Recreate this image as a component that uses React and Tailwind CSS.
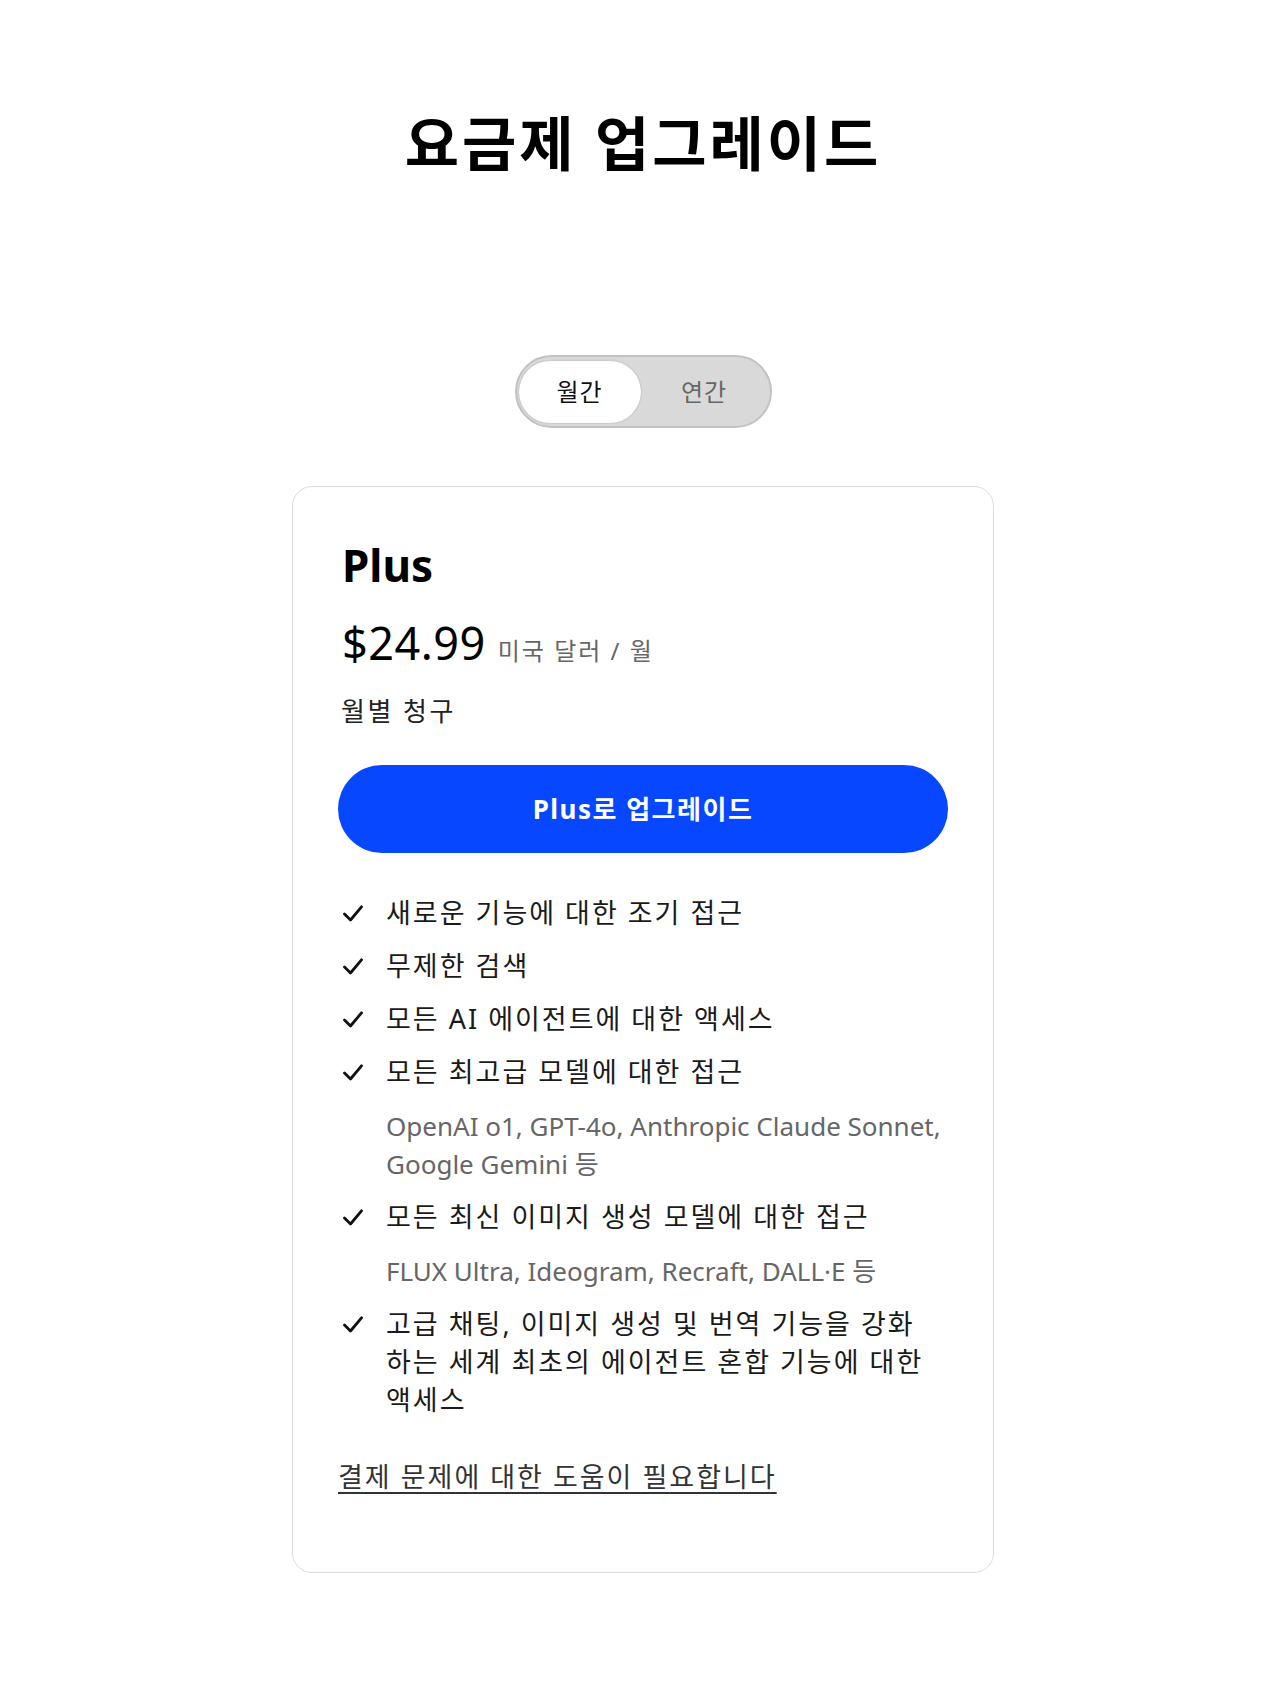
import React from 'react'

const FONT = { fontFamily: '"Noto Sans", "Noto Sans CJK KR", sans-serif' }

const features = [
  { text: '새로운 기능에 대한 조기 접근' },
  { text: '무제한 검색' },
  { text: '모든 AI 에이전트에 대한 액세스' },
  { text: '모든 최고급 모델에 대한 접근', sub: 'OpenAI o1, GPT-4o, Anthropic Claude Sonnet, Google Gemini 등' },
  { text: '모든 최신 이미지 생성 모델에 대한 접근', sub: 'FLUX Ultra, Ideogram, Recraft, DALL·E 등' },
  { text: '고급 채팅, 이미지 생성 및 번역 기능을 강화하는 세계 최초의 에이전트 혼합 기능에 대한 액세스' },
]

function Check() {
  return (
    <svg width="20" height="17" viewBox="0 0 20 17" className="shrink-0">
      <polyline points="1.5,9 7.5,15 18.5,1.8" fill="none" stroke="#111" strokeWidth="2.8" strokeLinecap="round" strokeLinejoin="round" />
    </svg>
  )
}

export default function App() {
  return (
    <div className="min-h-screen bg-white text-black pl-[6px] pt-[108px] pb-[126px]" style={FONT}>
      <div className="flex flex-col items-center">
        <h1 className="text-[59px] leading-[70px] font-bold tracking-[3px]">요금제 업그레이드</h1>

        <div className="mt-[177px] w-[257px] h-[73px] rounded-full border-2 border-[#c2c2c2] bg-[#d9d9d9] flex items-center pl-[2px] pr-[2px]">
          <button className="w-[122px] h-[62px] rounded-full bg-white shadow-[0_0_2px_rgba(0,0,0,0.25)] text-[24px] tracking-[1px] text-[#111] flex items-center justify-center">
            월간
          </button>
          <button className="flex-1 h-[62px] text-[24px] tracking-[1px] text-[#666] flex items-center justify-center">
            연간
          </button>
        </div>

        <div className="mt-[58px] w-[702px] rounded-[20px] border border-[#dcdcdc] px-[45px] pt-[52px] pb-[76px]">
          <div className="pl-[4px] text-[44px] leading-[53px] font-bold">Plus</div>

          <div className="mt-[26px] pl-[4px] flex items-baseline h-[50px]">
            <span className="text-[45px] leading-[50px] tracking-[0.5px]">$24.99</span>
            <span className="ml-[12px] text-[24px] tracking-[2px] text-[#666]">미국 달러 / 월</span>
          </div>

          <div className="mt-[26px] pl-[3px] text-[26px] leading-[34px] tracking-[2.5px] text-[#222]">월별 청구</div>

          <button className="mt-[37px] w-full h-[88px] rounded-full bg-[#0747ff] text-white text-[26px] font-bold tracking-[1.5px] flex items-center justify-center">
            Plus로 업그레이드
          </button>

          <ul className="mt-[41px] flex flex-col gap-[15px]">
            {features.map((f) => (
              <li key={f.text} className="flex">
                <div className="w-[48px] h-[38px] flex items-center pl-[5px]">
                  <Check />
                </div>
                <div className="flex-1">
                  <div className="pr-[14px] text-[27px] leading-[38px] tracking-[2px] text-[#1a1a1a]">{f.text}</div>
                  {f.sub && (
                    <div className="mt-[16px] text-[26px] leading-[38px] text-[#666]">{f.sub}</div>
                  )}
                </div>
              </li>
            ))}
          </ul>

          <a href="#" className="mt-[39px] block text-[27px] leading-[38px] tracking-[2px] text-[#333] underline underline-offset-[5px] decoration-[2px]">
            결제 문제에 대한 도움이 필요합니다
          </a>
        </div>
      </div>
    </div>
  )
}
